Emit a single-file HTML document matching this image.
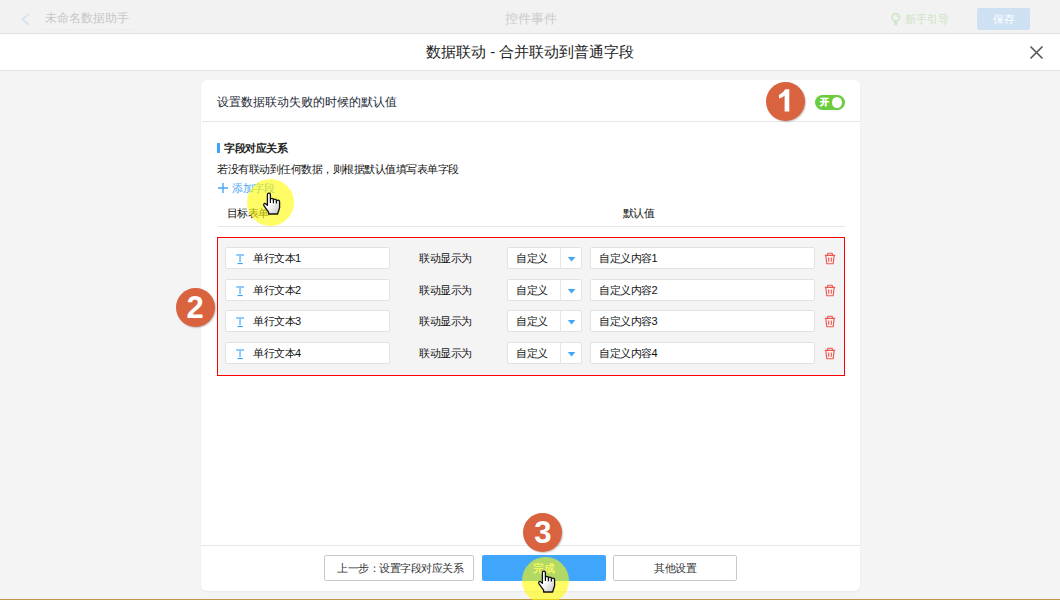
<!DOCTYPE html>
<html><head><meta charset="utf-8">
<style>
*{margin:0;padding:0;box-sizing:border-box}
html,body{width:1060px;height:600px;overflow:hidden;background:#f4f4f4;font-family:"Liberation Sans",sans-serif;color:#333}
.abs{position:absolute}
#topbar{left:0;top:0;width:1060px;height:34px;background:#f2f2f2;border-bottom:1px solid #e0e0e0;box-shadow:0 1px 3px rgba(0,0,0,.07)}
#header{left:0;top:34px;width:1060px;height:37px;background:#fff;border-bottom:1px solid #e2e2e2}
#card{left:201px;top:80px;width:659px;height:511px;background:#fff;border-radius:6px;box-shadow:0 1px 2px rgba(0,0,0,.05)}
.t{position:absolute;white-space:nowrap;line-height:1}
.badge{position:absolute;width:39px;height:39px;border-radius:50%;background:#d9623f;color:#fff;font-weight:bold;font-size:31px;text-align:center;line-height:39px;box-shadow:1px 1px 1.5px rgba(0,0,0,.22)}
.inp{position:absolute;background:#fff;border:1px solid #e2e2e2;border-radius:2px}
.hl{position:absolute;width:47px;height:47px;border-radius:50%;background:rgba(255,250,0,.6)}
.f11{font-size:11px;letter-spacing:-0.5px;color:#111}
.btn{position:absolute;top:555px;height:26px;border:1px solid #c9c9c9;border-radius:2px;background:#fff}
</style></head><body>
<div id="topbar" class="abs">
  <svg class="abs" style="left:20px;top:12px" width="12" height="14" viewBox="0 0 12 14"><path d="M9 1.8 L2.6 7.3 L9 12.8" fill="none" stroke="#cfe3f3" stroke-width="1.6"/></svg>
  <div class="t" style="left:45px;top:12px;font-size:12px;color:#c8c8c8">未命名数据助手</div>
  <div class="abs" style="left:44px;top:29px;width:90px;height:1px;border-top:1px dashed #e9e9e9"></div>
  <div class="t" style="left:505px;top:12px;font-size:13px;color:#cbcbcb">控件事件</div>
  <svg class="abs" style="left:890px;top:12px" width="12" height="15" viewBox="0 0 12 15"><circle cx="5.75" cy="5.3" r="3.7" fill="none" stroke="#d0e8c8" stroke-width="1.7"/><path d="M3.7 8.4 L7.8 8.4 L7.1 12.9 Q5.75 13.9 4.4 12.9 Z" fill="#d0e8c8"/><path d="M5.6 3.3 Q7.2 3.6 7.6 5.2" fill="none" stroke="#d0e8c8" stroke-width="0.9"/></svg>
  <div class="t" style="left:905px;top:14px;font-size:11px;color:#cbe4c2">新手引导</div>
  <div class="abs" style="left:977px;top:8px;width:53px;height:22px;background:#cde1f3;border-radius:2px"></div>
  <div class="t" style="left:993px;top:14px;font-size:11px;color:#fff">保存</div>
</div>
<div id="header" class="abs">
  <div class="t" style="left:426px;top:10px;font-size:15px;color:#222">数据联动 - 合并联动到普通字段</div>
  <svg class="abs" style="left:1029px;top:11px" width="15" height="15" viewBox="0 0 15 15"><path d="M1.5 1.5 L13.5 13.5 M13.5 1.5 L1.5 13.5" stroke="#555" stroke-width="1.6"/></svg>
</div>
<div id="card" class="abs"></div>
<div class="t" style="left:217px;top:96px;font-size:12px;color:#1e2a38">设置数据联动失败的时候的默认值</div>
<div class="abs" style="left:202px;top:121px;width:658px;height:1px;background:#e6e6e6"></div>
<!-- toggle -->
<div class="abs" style="left:815px;top:95px;width:30px;height:15px;border-radius:8px;background:#6bcc3e"></div>
<div class="abs" style="left:832px;top:97px;width:10px;height:11px;border-radius:50%;background:#fff"></div>
<div class="t" style="left:819.5px;top:97.5px;font-size:9px;font-weight:bold;color:#fff;-webkit-text-stroke:0.4px #fff">开</div>

<div class="abs" style="left:217px;top:143px;width:3px;height:10px;background:#3fa3fb"></div>
<div class="t f11" style="left:224px;top:143px;font-weight:bold;color:#222;-webkit-text-stroke:0">字段对应关系</div>
<div class="t f11" style="left:217px;top:164px;">若没有联动到任何数据，则根据默认值填写表单字段</div>
<svg class="abs" style="left:217px;top:182px" width="12" height="12" viewBox="0 0 12 12"><path d="M6 1 V11 M1 6 H11" stroke="#45a6f8" stroke-width="1.4"/></svg>
<div class="t f11" style="left:232px;top:183px;color:#45a6f8">添加字段</div>
<div class="t f11" style="left:226.5px;top:208px;">目标表单</div>
<div class="t f11" style="left:622.5px;top:208px;">默认值</div>
<div class="abs" style="left:218px;top:226px;width:627px;height:1px;background:#e6e6e6"></div>

<!-- red box -->
<div class="abs" style="left:217px;top:237px;width:628px;height:139px;border:1px solid #f00;background:#f4f4f4"></div>
<div class="inp" style="left:225px;top:247px;width:165px;height:22px"></div>
<svg class="abs" style="left:236px;top:254px" width="9" height="12" viewBox="0 0 9 12"><path d="M0.2 1 H8 M4.1 1 V8" stroke="#8ecbfb" stroke-width="2"/><path d="M1.6 9.5 H6.7" stroke="#3a9ff2" stroke-width="1.2"/></svg>
<div class="t f11" style="left:253px;top:253.1px">单行文本1</div>
<div class="t f11" style="left:419px;top:253.1px">联动显示为</div>
<div class="inp" style="left:507px;top:247px;width:75px;height:22px"></div>
<div class="abs" style="left:560px;top:248px;width:1px;height:20px;background:#e6e6e6"></div>
<svg class="abs" style="left:567px;top:256.5px" width="10" height="5" viewBox="0 0 10 5"><path d="M0.8 0 H8.4 L4.6 4.4 Z" fill="#45a6f8"/></svg>
<div class="t f11" style="left:516px;top:253.1px">自定义</div>
<div class="inp" style="left:590px;top:247px;width:225px;height:22px"></div>
<div class="t f11" style="left:599px;top:253.1px">自定义内容1</div>
<svg class="abs" style="left:824px;top:251.5px" width="12" height="13" viewBox="0 0 12 13"><path d="M3.6 3 V2.1 Q3.6 1.3 4.4 1.3 H7.6 Q8.4 1.3 8.4 2.1 V3 M0.8 3.4 H11.2 M1.9 3.9 L2.7 11.1 Q2.8 11.8 3.5 11.8 H8.5 Q9.2 11.8 9.3 11.1 L10.1 3.9 M4.7 5.4 V9.8 M7.3 5.4 V9.8" fill="none" stroke="#ef5350" stroke-width="1.1"/></svg>
<div class="inp" style="left:225px;top:279px;width:165px;height:22px"></div>
<svg class="abs" style="left:236px;top:286px" width="9" height="12" viewBox="0 0 9 12"><path d="M0.2 1 H8 M4.1 1 V8" stroke="#8ecbfb" stroke-width="2"/><path d="M1.6 9.5 H6.7" stroke="#3a9ff2" stroke-width="1.2"/></svg>
<div class="t f11" style="left:253px;top:285.1px">单行文本2</div>
<div class="t f11" style="left:419px;top:285.1px">联动显示为</div>
<div class="inp" style="left:507px;top:279px;width:75px;height:22px"></div>
<div class="abs" style="left:560px;top:280px;width:1px;height:20px;background:#e6e6e6"></div>
<svg class="abs" style="left:567px;top:288.5px" width="10" height="5" viewBox="0 0 10 5"><path d="M0.8 0 H8.4 L4.6 4.4 Z" fill="#45a6f8"/></svg>
<div class="t f11" style="left:516px;top:285.1px">自定义</div>
<div class="inp" style="left:590px;top:279px;width:225px;height:22px"></div>
<div class="t f11" style="left:599px;top:285.1px">自定义内容2</div>
<svg class="abs" style="left:824px;top:283.5px" width="12" height="13" viewBox="0 0 12 13"><path d="M3.6 3 V2.1 Q3.6 1.3 4.4 1.3 H7.6 Q8.4 1.3 8.4 2.1 V3 M0.8 3.4 H11.2 M1.9 3.9 L2.7 11.1 Q2.8 11.8 3.5 11.8 H8.5 Q9.2 11.8 9.3 11.1 L10.1 3.9 M4.7 5.4 V9.8 M7.3 5.4 V9.8" fill="none" stroke="#ef5350" stroke-width="1.1"/></svg>
<div class="inp" style="left:225px;top:310px;width:165px;height:22px"></div>
<svg class="abs" style="left:236px;top:317px" width="9" height="12" viewBox="0 0 9 12"><path d="M0.2 1 H8 M4.1 1 V8" stroke="#8ecbfb" stroke-width="2"/><path d="M1.6 9.5 H6.7" stroke="#3a9ff2" stroke-width="1.2"/></svg>
<div class="t f11" style="left:253px;top:316.1px">单行文本3</div>
<div class="t f11" style="left:419px;top:316.1px">联动显示为</div>
<div class="inp" style="left:507px;top:310px;width:75px;height:22px"></div>
<div class="abs" style="left:560px;top:311px;width:1px;height:20px;background:#e6e6e6"></div>
<svg class="abs" style="left:567px;top:319.5px" width="10" height="5" viewBox="0 0 10 5"><path d="M0.8 0 H8.4 L4.6 4.4 Z" fill="#45a6f8"/></svg>
<div class="t f11" style="left:516px;top:316.1px">自定义</div>
<div class="inp" style="left:590px;top:310px;width:225px;height:22px"></div>
<div class="t f11" style="left:599px;top:316.1px">自定义内容3</div>
<svg class="abs" style="left:824px;top:314.5px" width="12" height="13" viewBox="0 0 12 13"><path d="M3.6 3 V2.1 Q3.6 1.3 4.4 1.3 H7.6 Q8.4 1.3 8.4 2.1 V3 M0.8 3.4 H11.2 M1.9 3.9 L2.7 11.1 Q2.8 11.8 3.5 11.8 H8.5 Q9.2 11.8 9.3 11.1 L10.1 3.9 M4.7 5.4 V9.8 M7.3 5.4 V9.8" fill="none" stroke="#ef5350" stroke-width="1.1"/></svg>
<div class="inp" style="left:225px;top:342px;width:165px;height:22px"></div>
<svg class="abs" style="left:236px;top:349px" width="9" height="12" viewBox="0 0 9 12"><path d="M0.2 1 H8 M4.1 1 V8" stroke="#8ecbfb" stroke-width="2"/><path d="M1.6 9.5 H6.7" stroke="#3a9ff2" stroke-width="1.2"/></svg>
<div class="t f11" style="left:253px;top:348.1px">单行文本4</div>
<div class="t f11" style="left:419px;top:348.1px">联动显示为</div>
<div class="inp" style="left:507px;top:342px;width:75px;height:22px"></div>
<div class="abs" style="left:560px;top:343px;width:1px;height:20px;background:#e6e6e6"></div>
<svg class="abs" style="left:567px;top:351.5px" width="10" height="5" viewBox="0 0 10 5"><path d="M0.8 0 H8.4 L4.6 4.4 Z" fill="#45a6f8"/></svg>
<div class="t f11" style="left:516px;top:348.1px">自定义</div>
<div class="inp" style="left:590px;top:342px;width:225px;height:22px"></div>
<div class="t f11" style="left:599px;top:348.1px">自定义内容4</div>
<svg class="abs" style="left:824px;top:346.5px" width="12" height="13" viewBox="0 0 12 13"><path d="M3.6 3 V2.1 Q3.6 1.3 4.4 1.3 H7.6 Q8.4 1.3 8.4 2.1 V3 M0.8 3.4 H11.2 M1.9 3.9 L2.7 11.1 Q2.8 11.8 3.5 11.8 H8.5 Q9.2 11.8 9.3 11.1 L10.1 3.9 M4.7 5.4 V9.8 M7.3 5.4 V9.8" fill="none" stroke="#ef5350" stroke-width="1.1"/></svg>

<!-- footer -->
<div class="abs" style="left:201px;top:545px;width:659px;height:1px;background:#e6e6e6"></div>
<div class="btn" style="left:324px;width:150px"></div>
<div class="t f11" style="left:337px;top:563px;color:#333;-webkit-text-stroke:0">上一步：设置字段对应关系</div>
<div class="abs" style="left:482px;top:555px;width:124px;height:26px;background:#40a6fc;border-radius:2px"></div>
<div class="t f11" style="left:533px;top:563px;color:#fff;-webkit-text-stroke:0.2px #fff">完成</div>
<div class="btn" style="left:613px;width:124px"></div>
<div class="t f11" style="left:654px;top:563px;color:#333;-webkit-text-stroke:0">其他设置</div>

<div class="abs" style="left:0;top:599px;width:1060px;height:1px;background:#c09544"></div>

<div class="badge" style="left:765.5px;top:81.7px"><svg class="abs" style="left:0;top:0" width="39" height="39" viewBox="0 0 39 39"><path d="M23.3 7.2 V29.5 H18.6 V13.5 C17.1 14.8 15.2 15.9 13 16.6 V12.7 C14.9 12 17.6 10 19.2 7.2 Z" fill="#fff"/></svg></div>
<div class="badge" style="left:175.5px;top:287.5px">2</div>
<div class="badge" style="left:523.3px;top:513.3px">3</div>

<div class="hl" style="left:247px;top:179px"></div>
<div class="hl" style="left:522px;top:557px"></div>
<svg class="abs" style="left:258px;top:188px" width="28" height="30" viewBox="0 0 28 30"><defs><linearGradient id="hg" x1="0" y1="0" x2="1" y2="1"><stop offset="0.45" stop-color="#fff"/><stop offset="1" stop-color="#c4c4c4"/></linearGradient></defs><path d="M9.4 15.6 L9.4 6.6 C9.4 4.6 12.4 4.6 12.4 6.6 L12.4 11.8 C12.4 9.9 15.4 9.9 15.4 11.8 L15.4 12.6 C15.4 10.7 18.4 10.7 18.4 12.6 L18.4 13.6 C18.4 11.7 21.6 11.7 21.6 13.8 L21.6 19.8 L19.6 26 L10.6 26 L10.6 24.2 L6.2 18.2 C4.9 16.4 6.3 14.6 7.9 15.9 L9.4 17.4 Z" fill="url(#hg)" stroke="#111" stroke-width="1.3" stroke-linejoin="round"/><path d="M12.4 11.8 V15 M15.4 12.6 V15.2 M18.4 13.6 V15.4" stroke="#111" stroke-width="1.2"/></svg>
<svg class="abs" style="left:533px;top:566px" width="28" height="30" viewBox="0 0 28 30"><defs><linearGradient id="hg2" x1="0" y1="0" x2="1" y2="1"><stop offset="0.45" stop-color="#fff"/><stop offset="1" stop-color="#c4c4c4"/></linearGradient></defs><path d="M9.4 15.6 L9.4 6.6 C9.4 4.6 12.4 4.6 12.4 6.6 L12.4 11.8 C12.4 9.9 15.4 9.9 15.4 11.8 L15.4 12.6 C15.4 10.7 18.4 10.7 18.4 12.6 L18.4 13.6 C18.4 11.7 21.6 11.7 21.6 13.8 L21.6 19.8 L19.6 26 L10.6 26 L10.6 24.2 L6.2 18.2 C4.9 16.4 6.3 14.6 7.9 15.9 L9.4 17.4 Z" fill="url(#hg2)" stroke="#111" stroke-width="1.3" stroke-linejoin="round"/><path d="M12.4 11.8 V15 M15.4 12.6 V15.2 M18.4 13.6 V15.4" stroke="#111" stroke-width="1.2"/></svg>
</body></html>
